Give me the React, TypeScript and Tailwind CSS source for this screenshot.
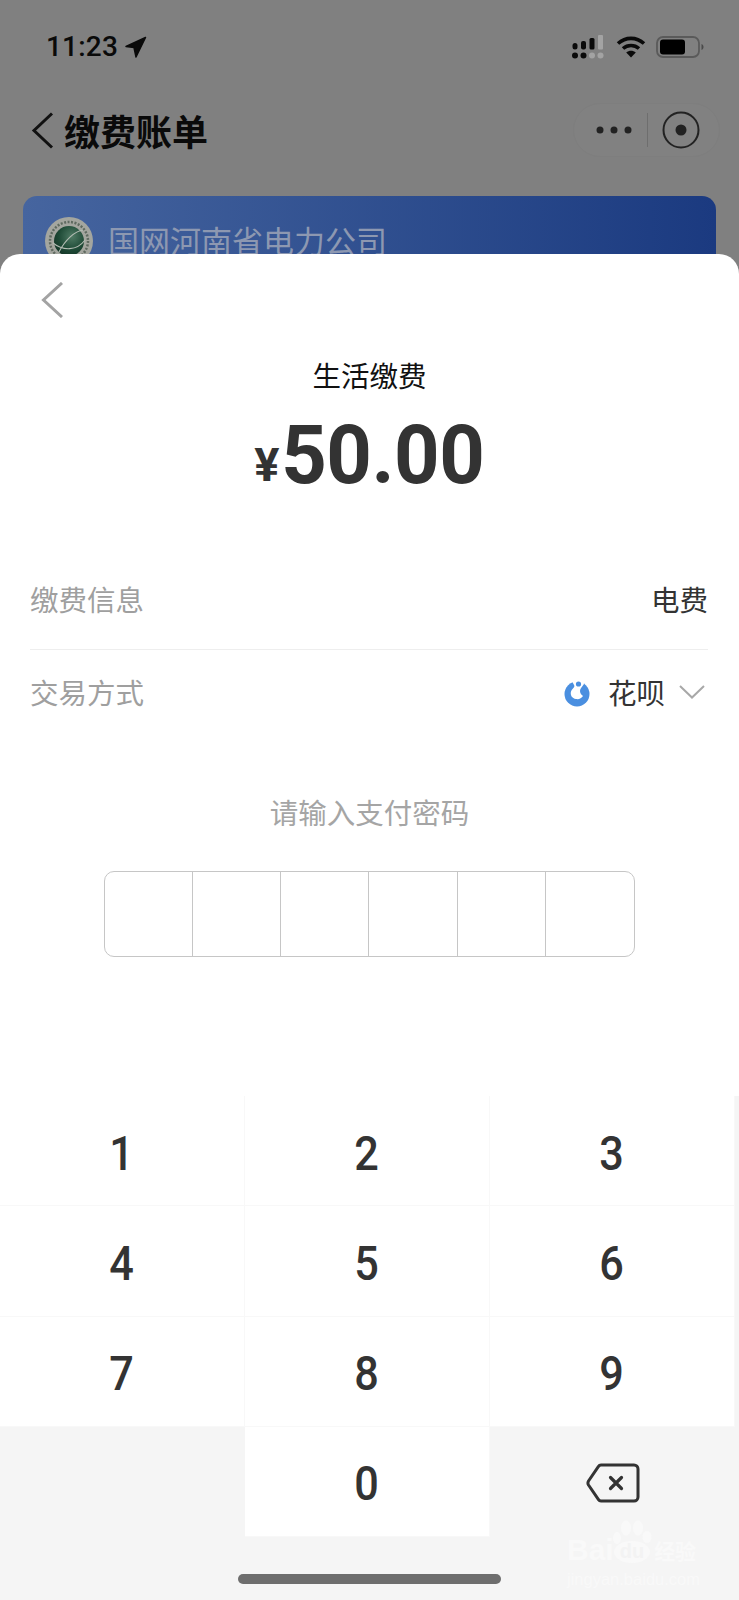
const cjk = { fontFamily: '"Noto Sans CJK SC", sans-serif' };
const num = { fontFamily: 'Roboto, "Liberation Sans", sans-serif' };
const lib = { fontFamily: '"Liberation Sans", sans-serif' };

function SignalIcon() {
  return (
    <svg width="34" height="26" viewBox="0 0 34 26">
      <rect x="1.5" y="9" width="5" height="6.5" rx="2.5" fill="#0a0a0a" />
      <rect x="10" y="7" width="5" height="8.5" rx="2" fill="#0a0a0a" />
      <rect x="18.5" y="4" width="5" height="11.5" rx="1.5" fill="#0a0a0a" />
      <rect x="27" y="1" width="5" height="14.5" rx="1" fill="#a3a3a3" />
      <circle cx="4" cy="21.5" r="3" fill="#0a0a0a" />
      <circle cx="12.5" cy="21.5" r="3" fill="#0a0a0a" />
      <circle cx="21" cy="21.5" r="3" fill="#a3a3a3" />
      <circle cx="29.5" cy="21.5" r="3" fill="#a3a3a3" />
    </svg>
  );
}

function WifiIcon() {
  return (
    <svg width="30" height="22" viewBox="0 0 30 22" fill="none" stroke="#0a0a0a" strokeWidth="3.6">
      <path d="M2 7.5C9.5 .6 20.5 .6 28 7.5" />
      <path d="M7 12.5c4.600-4 11.400-4 16 0" />
      <path d="M15 21.500l-4.800-5c2.800-2.200 6.800-2.200 9.600 0z" fill="#0a0a0a" stroke="none" />
    </svg>
  );
}

function BatteryIcon() {
  return (
    <svg width="48" height="22" viewBox="0 0 48 22">
      <rect x="1" y="1" width="42" height="20" rx="6" fill="none" stroke="#5a5a5a" strokeWidth="1.800" />
      <rect x="4" y="3.500" width="25" height="15" rx="3" fill="#000" />
      <path d="M45.500 8c1.400.6 2 1.600 2 3s-.6 2.400-2 3z" fill="#4a4a4a" />
    </svg>
  );
}

function GridLogo() {
  return (
    <svg width="48" height="48" viewBox="0 0 48 48">
      <defs>
        <radialGradient id="globe" cx="0.6" cy="0.35" r="0.8">
          <stop offset="0" stopColor="#4f7a64" />
          <stop offset="0.55" stopColor="#1e4a36" />
          <stop offset="1" stopColor="#0f2d20" />
        </radialGradient>
      </defs>
      <circle cx="24" cy="24" r="24" fill="#a4a69f" />
      <circle cx="24" cy="24" r="19" fill="none" stroke="#5f6a60" strokeWidth="2.500" strokeDasharray="2 1.500" />
      <circle cx="24" cy="24" r="15" fill="url(#globe)" />
      <path d="M8 26c10 8 24 8 32-3M14 35c6-12 16-21 24-22" fill="none" stroke="#b4bdb4" strokeWidth="1.100" />
    </svg>
  );
}

function HuabeiIcon() {
  return (
    <svg width="26" height="26" viewBox="0 0 26 26">
      <circle cx="13" cy="13" r="12.500" fill="#4a8fe0" />
      <path
        d="M8 0H19.500L20 3C18 6 16 7.500 16 10C16 12 17.500 14 19 15C17.500 17.500 15 18.500 12 18C8 17.500 6 14 7 10.500C7.500 8.500 10 7 10.500 5Z"
        fill="#fff"
      />
      <circle cx="14.500" cy="3" r="2.600" fill="#4a8fe0" />
    </svg>
  );
}

function Key({ n }: { n: string }) {
  return (
    <div
      className="flex h-[110.25px] items-center justify-center border-r border-b border-[#f8f8f8] bg-white text-[48px] leading-none font-medium text-[#333333]"
      style={num}
    >
      <span className="mt-[6px] scale-x-90">{n}</span>
    </div>
  );
}

export default function App() {
  return (
    <div className="relative h-[1600px] w-[739px] overflow-hidden bg-[#808080]">
      <div className="flex h-[94px] items-center pr-[35px] pl-[46px]">
        <span className="text-[28px] leading-none font-medium tracking-[0.2px] text-[#0a0a0a]" style={num}>
          11:23
        </span>
        <svg className="ml-[6px]" width="23" height="23" viewBox="0 0 23 23">
          <path d="M21.500 1.500L2 10.500 10 11.500 12 21z" fill="#0a0a0a" stroke="#0a0a0a" strokeWidth="1.500" strokeLinejoin="round" />
        </svg>
        <div className="ml-auto flex items-center">
          <SignalIcon />
          <div className="ml-[11px]">
            <WifiIcon />
          </div>
          <div className="ml-[10px]">
            <BatteryIcon />
          </div>
        </div>
      </div>

      <div className="flex h-[72px] items-center pr-[19px] pl-[31px]">
        <svg width="23" height="37" viewBox="0 0 23 37" fill="none" stroke="#111111" strokeWidth="3">
          <path d="M21 1.500L3 18.500l18 17" />
        </svg>
        <span className="ml-[10px] text-[36px] leading-none font-bold text-[#0a0a0a]" style={cjk}>
          缴费账单
        </span>
        <div className="ml-auto flex h-[54px] w-[147px] items-center rounded-[27px] border border-[#7e7e7e] bg-[#818181]">
          <svg className="ml-[22px]" width="36" height="8" viewBox="0 0 36 8">
            <circle cx="4" cy="4" r="3.500" fill="#222222" />
            <circle cx="18" cy="4" r="3.500" fill="#222222" />
            <circle cx="32" cy="4" r="3.500" fill="#222222" />
          </svg>
          <div className="ml-[15px] h-[34px] w-px bg-[#6e6e6e]" />
          <svg className="ml-[14px]" width="38" height="38" viewBox="0 0 38 38">
            <circle cx="19" cy="19" r="17.500" fill="none" stroke="#222222" strokeWidth="2" />
            <circle cx="19" cy="19" r="5.500" fill="#222222" />
          </svg>
        </div>
      </div>

      <div className="mx-[23px] mt-[30px] flex h-[120px] items-start rounded-t-[14px] bg-gradient-to-r from-[#46659f] to-[#1b3a80] pt-[21px] pl-[22px]">
        <GridLogo />
        <span className="ml-[15px] text-[31px] leading-[46px] text-[#8d98b1]" style={cjk}>
          国网河南省电力公司
        </span>
      </div>

      <div className="absolute top-[254px] left-0 flex h-[1346px] w-full flex-col rounded-t-[20px] bg-white">
        <div className="h-[94px] pt-[28px] pl-[41px]">
          <svg width="22" height="36" viewBox="0 0 22 36" fill="none" stroke="#a3a3a3" strokeWidth="3">
            <path d="M21 1L2.500 18 21 35" />
          </svg>
        </div>
        <div className="text-center text-[28.500px] leading-[54px] text-[#111111]" style={cjk}>
          生活缴费
        </div>
        <div className="flex h-[106px] items-center justify-center pl-[3px] text-[#333333]" style={num}>
          <span className="mt-[19px] text-[47px] leading-none font-bold">¥</span>
          <span className="ml-[-1px] scale-x-[0.97] text-[82px] leading-none font-bold tracking-[-0.5px]">50.00</span>
        </div>
        <div className="mt-[45px] mr-[31px] ml-[30px] flex h-[97px] items-center justify-between border-b border-[#eeeeee] pb-[3px] text-[28.500px]" style={cjk}>
          <span className="text-[#9f9f9f]">缴费信息</span>
          <span className="text-[#333333]">电费</span>
        </div>
        <div className="mr-[31px] ml-[30px] flex h-[87px] items-center pb-[3px] text-[28.500px]" style={cjk}>
          <span className="text-[#9f9f9f]">交易方式</span>
          <div className="mt-[3px] ml-auto">
            <HuabeiIcon />
          </div>
          <span className="ml-[18px] text-[#333333]">花呗</span>
          <svg className="mr-[3px] ml-[14px]" width="26" height="14" viewBox="0 0 26 14" fill="none" stroke="#a8a8a8" strokeWidth="2">
            <path d="M1 1l12 11.500L25 1" />
          </svg>
        </div>
        <div className="mt-[54px] text-center text-[28.500px] leading-[42px] text-[#a5a5a5]" style={cjk}>
          请输入支付密码
        </div>
        <div className="mx-auto mt-[38px] grid h-[86px] w-[531px] grid-cols-6 rounded-[10px] border border-[#c6c6c6]">
          {[0, 1, 2, 3, 4].map((i) => (
            <div key={i} className="border-r border-[#c6c6c6]" />
          ))}
          <div />
        </div>
        <div className="mt-auto h-[504px] bg-[#f5f5f5]">
          <div className="grid w-[735px] grid-cols-3">
            {["1", "2", "3", "4", "5", "6", "7", "8", "9"].map((n) => (
              <Key key={n} n={n} />
            ))}
            <div />
            <Key n="0" />
            <div className="flex items-center justify-center pt-[2px]">
              <svg width="54" height="40" viewBox="0 0 54 40" fill="none" stroke="#333333" strokeWidth="3" strokeLinejoin="round">
                <path d="M15 2H48a4 4 0 0 1 4 4V34a4 4 0 0 1-4 4H15a3 3 0 0 1-2.500-1.400L2.500 22a4 4 0 0 1 0-4L12.500 3.400A3 3 0 0 1 15 2z" />
                <path d="M24.500 14.500l11 11M35.500 14.500l-11 11" strokeWidth="3.200" strokeLinecap="round" />
              </svg>
            </div>
          </div>
          <div className="mt-[37px] mr-[238px] ml-[238px] h-[10px] rounded-full bg-[#6e6e6e]" />
        </div>
      </div>

      <div className="absolute top-[1520px] left-[567px] h-[66px] w-[134px] text-[#f9f9f9]">
        <svg className="absolute top-0 left-[45px]" width="41" height="43" viewBox="0 0 41 43" fill="#f9f9f9">
          <ellipse cx="5" cy="18" rx="4" ry="6" />
          <ellipse cx="14" cy="8" rx="5" ry="7.500" />
          <ellipse cx="26" cy="8" rx="5" ry="7.500" />
          <ellipse cx="35" cy="17" rx="4.500" ry="6" />
          <ellipse cx="20" cy="32" rx="18" ry="11" />
        </svg>
        <div className="flex items-end pt-[16px]">
          <span className="text-[30px] leading-[28px] font-bold" style={lib}>
            Bai
          </span>
          <span className="relative ml-[6px] text-[20px] leading-[26px] font-bold text-[#f3f3f3]" style={lib}>
            du
          </span>
          <span className="ml-[10px] text-[21px] leading-[28px] font-bold" style={cjk}>
            经验
          </span>
        </div>
        <div className="mt-[6px] text-[16.500px] leading-[18px]" style={lib}>
          jingyan.baidu.com
        </div>
      </div>
    </div>
  );
}
